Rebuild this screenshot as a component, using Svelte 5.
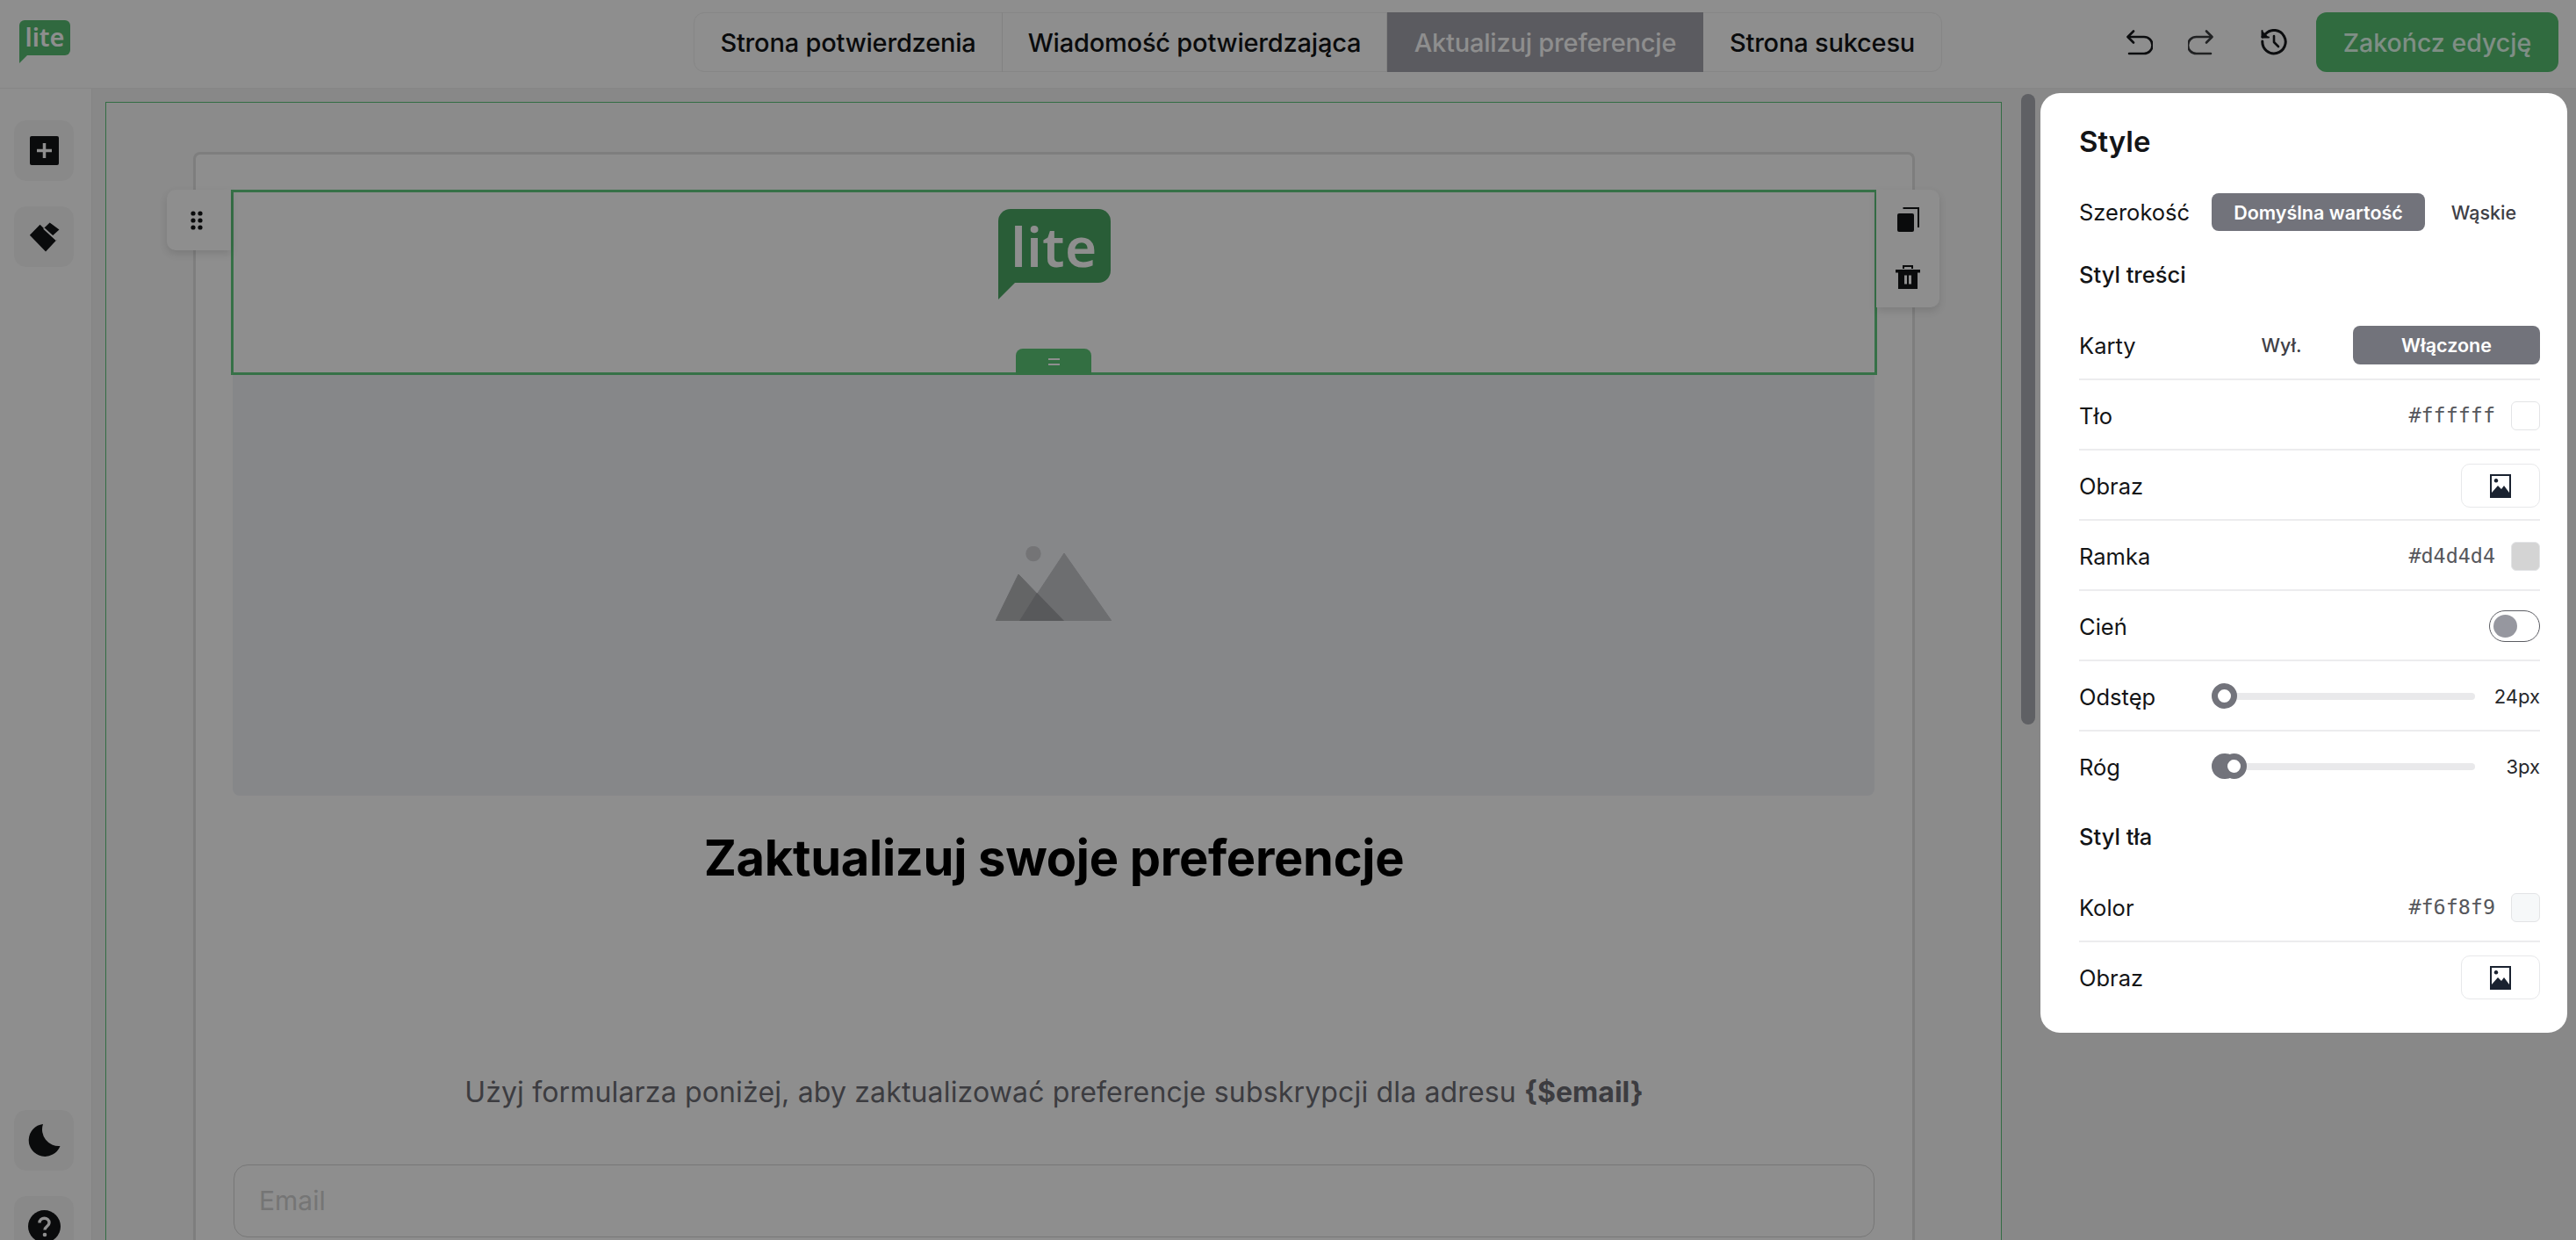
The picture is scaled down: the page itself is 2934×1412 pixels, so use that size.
<script>
  const tabs = [
    { label: 'Strona potwierdzenia', width: 351 },
    { label: 'Wiadomość potwierdzająca', width: 438, },
    { label: 'Aktualizuj preferencje', width: 360, active: true },
    { label: 'Strona sukcesu', width: 271 }
  ];
</script>

<div class="app">
  <header class="topbar">
    <div class="brand">
      <div class="bubble small"><span>lite</span></div>
    </div>
    <nav class="tabs">
      {#each tabs as tab}
        <button class="tab" class:active={tab.active} style="width: {tab.width}px">{tab.label}</button>
      {/each}
    </nav>
    <div class="actions">
      <svg class="hist undo" viewBox="0 0 30 30" fill="none" stroke="#17181b" stroke-width="2.6" stroke-linecap="round" stroke-linejoin="round">
        <path d="M8 2.500 1.500 9 8 15.500" /><path d="M2 9h18a8.500 8.500 0 0 1 0 19H3" />
      </svg>
      <svg class="hist redo" viewBox="0 0 30 30" fill="none" stroke="#3c3d40" stroke-width="2.6" stroke-linecap="round" stroke-linejoin="round">
        <path d="M21 2.500 27.500 9 21 15.500" /><path d="M27 9H9.500a8.500 8.500 0 0 0 0 19H26" />
      </svg>
      <svg class="hist clock" viewBox="0 0 30 30" fill="none" stroke="#17181b" stroke-width="3" stroke-linecap="round" stroke-linejoin="round">
        <path d="M1.800 14a13.200 13.200 0 1 0 3.700-8.500L2 9" />
        <path d="M1.500 2v7.500H9" fill="#17181b" stroke-width="2" />
        <path d="M15 8v7l5 5" stroke-width="2.600" />
      </svg>
      <button class="finish">Zakończ edycję</button>
    </div>
  </header>

  <div class="body">
    <aside class="rail">
      <div class="rail-group">
        <button class="rail-btn">
          <svg viewBox="0 0 33 33" width="33" height="33">
            <rect width="33" height="33" rx="2" fill="#131416" />
            <path d="M16.500 8v17M8 16.500h17" stroke="#fff" stroke-width="3.500" />
          </svg>
        </button>
        <button class="rail-btn">
          <svg viewBox="60 375 120 115" width="37" height="36">
            <path d="M66 425 104 386 118 400 140 379 175 405 150 428 166 442 125 486Z" fill="#131416" />
            <path d="M118 400 165 443" stroke="#fff" stroke-width="6" />
          </svg>
        </button>
      </div>
      <div class="rail-group">
        <button class="rail-btn">
          <svg viewBox="0 0 37 37" width="37" height="37">
            <path d="M17 0A18.500 18.500 0 1 0 36.500 25 19 19 0 0 1 17 0Z" fill="#131416" />
          </svg>
        </button>
        <button class="rail-btn">
          <svg viewBox="0 0 37 37" width="37" height="37">
            <circle cx="18.500" cy="18.500" r="18.500" fill="#131416" />
            <path d="M13 14.500c0-7 11-7 11 0 0 4-5 4-5 8" fill="none" stroke="#fff" stroke-width="3.400" />
            <circle cx="19" cy="28" r="2.300" fill="#fff" />
          </svg>
        </button>
      </div>
    </aside>

    <main class="canvas">
      <div class="frame">
        <div class="card">
          <div class="block">
            <div class="handle">
              <svg viewBox="0 0 14 22" width="14" height="22" fill="#131416">
                <circle cx="3" cy="3" r="2.600" /><circle cx="11" cy="3" r="2.600" />
                <circle cx="3" cy="11" r="2.600" /><circle cx="11" cy="11" r="2.600" />
                <circle cx="3" cy="19" r="2.600" /><circle cx="11" cy="19" r="2.600" />
              </svg>
            </div>
            <div class="bubble big"><span>lite</span></div>
            <div class="resize"><i></i><i></i></div>
            <div class="tools">
              <svg viewBox="0 0 25 28" width="25" height="28">
                <path d="M6.500 1h17.500v22" fill="none" stroke="#131416" stroke-width="2" />
                <rect x="0" y="7" width="19" height="21" rx="2" fill="#131416" />
              </svg>
              <svg viewBox="0 0 28 27" width="28" height="27">
                <path d="M9 4V1h10v3" fill="none" stroke="#131416" stroke-width="2" />
                <path d="M0 5h28v3.500H0z" fill="#131416" />
                <path d="M3 8h22v19H3z" fill="#131416" />
                <path d="M10 11.500h3v10h-3zM15 11.500h3v10h-3z" fill="#fff" />
              </svg>
            </div>
          </div>
          <div class="placeholder">
            <svg viewBox="0 0 132 85" width="132" height="85">
              <circle cx="43" cy="8.500" r="8.700" fill="#d0d1d4" />
              <path d="M78 8 132 85H27Z" fill="#c4c5c9" stroke="#c4c5c9" stroke-width="1" stroke-linejoin="round" />
              <path d="M26 32 0 85H77Z" fill="#b4b5b8" stroke="#b4b5b8" stroke-width="1" stroke-linejoin="round" />
              <path d="M47 53 78 85H27Z" fill="#9fa0a4" />
            </svg>
          </div>
          <h1>Zaktualizuj swoje preferencje</h1>
          <p>Użyj formularza poniżej, aby zaktualizować preferencje subskrypcji dla adresu <b>{'{$email}'}</b></p>
          <div class="input">Email</div>
        </div>
      </div>
    </main>
  </div>

  <div class="scrim"></div>
  <div class="scrollbar"></div>

  <section class="panel">
    <h2>Style</h2>
    <div class="plain width-row">
      <span class="label">Szerokość</span>
      <div class="segment width-seg">
        <span class="seg on wide">Domyślna wartość</span>
        <span class="seg narrow">Wąskie</span>
      </div>
    </div>
    <h3>Styl treści</h3>
    <div class="row">
      <span class="label">Karty</span>
      <div class="segment">
        <span class="seg off">Wył.</span>
        <span class="seg on cards">Włączone</span>
      </div>
    </div>
    <div class="row">
      <span class="label">Tło</span>
      <div class="color"><code>#ffffff</code><span class="swatch white"></span></div>
    </div>
    <div class="row">
      <span class="label">Obraz</span>
      <button class="image-btn">
        <svg viewBox="0 0 24 27" width="24" height="27"><path fill-rule="evenodd" d="M0 0h24v27H0zM2 2v19l7-8 4 4 3-4 6 8V2zM7 5a2.300 2.300 0 1 1-.01 0z" fill="#1a2230" /></svg>
      </button>
    </div>
    <div class="row">
      <span class="label">Ramka</span>
      <div class="color"><code>#d4d4d4</code><span class="swatch grey"></span></div>
    </div>
    <div class="row">
      <span class="label">Cień</span>
      <div class="toggle"><span></span></div>
    </div>
    <div class="row">
      <span class="label">Odstęp</span>
      <div class="slider">
        <div class="track"><span class="thumb"></span></div>
        <span class="value">24px</span>
      </div>
    </div>
    <div class="row plain-row">
      <span class="label">Róg</span>
      <div class="slider">
        <div class="track"><span class="fill"></span><span class="thumb shifted"></span></div>
        <span class="value">3px</span>
      </div>
    </div>
    <h3 class="second">Styl tła</h3>
    <div class="row">
      <span class="label">Kolor</span>
      <div class="color"><code>#f6f8f9</code><span class="swatch pale"></span></div>
    </div>
    <div class="row plain-row">
      <span class="label">Obraz</span>
      <button class="image-btn">
        <svg viewBox="0 0 24 27" width="24" height="27"><path fill-rule="evenodd" d="M0 0h24v27H0zM2 2v19l7-8 4 4 3-4 6 8V2zM7 5a2.300 2.300 0 1 1-.01 0z" fill="#1a2230" /></svg>
      </button>
    </div>
  </section>
</div>

<style>
  :global(body) {
    margin: 0;
    font-family: Inter, 'Liberation Sans', sans-serif;
    color: #131416;
  }

  button {
    font: inherit;
    border: none;
    background: none;
    padding: 0;
    color: inherit;
  }

  .app {
    position: relative;
    height: 100vh;
    overflow: hidden;
    background: #f4f4f4;
    display: flex;
    flex-direction: column;
  }

  .topbar {
    box-sizing: border-box;
    height: 101px;
    flex: none;
    background: #fff;
    border-bottom: 1px solid #f0f0f0;
    position: relative;
    display: flex;
    justify-content: center;
    padding-top: 14px;
    padding-left: 68px;
  }

  .brand {
    position: absolute;
    left: 22px;
    top: 23px;
  }

  .bubble {
    position: relative;
    display: flex;
    justify-content: center;
    background: #56bd72;
    color: #fff;
    font-family: 'Noto Sans', sans-serif;
    font-weight: 600;
  }

  .bubble::after {
    content: '';
    position: absolute;
    left: 0;
    top: 100%;
    border-style: solid;
  }

  .bubble.small {
    width: 58px;
    height: 40px;
    border-radius: 6px 6px 6px 0;
    font-size: 29px;
    line-height: 38px;
  }

  .bubble.small::after {
    border-width: 9px 9px 0 0;
    border-color: #56bd72 transparent transparent transparent;
  }

  .bubble.big {
    width: 128px;
    height: 84px;
    margin: 19px auto 0;
    border-radius: 14px 14px 14px 0;
    background: #4ba863;
    font-size: 62px;
    line-height: 84px;
    letter-spacing: 0.5px;
  }

  .bubble.big::after {
    border-width: 19px 19px 0 0;
    border-color: #4ba863 transparent transparent transparent;
  }

  .tabs {
    display: flex;
    height: 68px;
    box-sizing: border-box;
    border: 1px solid #f0f0f0;
    border-radius: 12px;
  }

  .tab {
    box-sizing: border-box;
    font-size: 29px;
    letter-spacing: -0.2px;
    font-weight: 450;
    border-right: 1px solid #eaeaea;
    white-space: nowrap;
    margin: -1px 0;
    height: 68px;
  }

  .tab:last-child {
    border-right: none;
  }

  .tab.active {
    background: #a3a3ac;
    color: #fff;
    border-right: none;
  }

  .actions {
    position: absolute;
    top: 14px;
    right: 20px;
    display: flex;
    align-items: center;
    height: 68px;
  }

  .hist {
    width: 30px;
    height: 30px;
  }

  .undo {
    margin-right: 41px;
    transform: translateX(1px);
  }

  .redo {
    margin-right: 53px;
  }

  .clock {
    margin-right: 33px;
  }

  .finish {
    width: 276px;
    height: 68px;
    border-radius: 12px;
    background: #56c071;
    color: #e4ffef;
    font-size: 28.500px;
    font-weight: 500;
  }

  .body {
    flex: 1;
    min-height: 0;
    display: flex;
  }

  .rail {
    box-sizing: border-box;
    width: 105px;
    flex: none;
    background: #fff;
    border-right: 1px solid #efefef;
    padding: 36px 20px 0 16px;
    display: flex;
    flex-direction: column;
    justify-content: space-between;
  }

  .rail-group {
    display: flex;
    flex-direction: column;
    gap: 29px;
  }

  .rail-btn {
    width: 68px;
    height: 69px;
    flex: none;
    border-radius: 14px;
    background: #f7f7f7;
    display: flex;
    align-items: center;
    justify-content: center;
  }

  .rail-group:last-child {
    margin-bottom: -19px;
  }

  .canvas {
    flex: none;
    width: 2219px;
    padding: 15px 0 0 15px;
    box-sizing: border-box;
    overflow: hidden;
  }

  .frame {
    box-sizing: border-box;
    width: 2160px;
    border: 1px solid #5cc47a;
    border-bottom: none;
    padding: 56px 95px 0 99px;
    background: #f9f9f9;
    height: 1400px;
  }

  .card {
    box-sizing: border-box;
    border: 3px solid #e2e2e2;
    border-bottom: none;
    border-radius: 8px 8px 0 0;
    background: #fff;
    padding: 40px 40px 0 40px;
    height: 1400px;
    width: 1961px;
  }

  .block {
    position: relative;
    box-sizing: border-box;
    height: 211px;
    border: 3px solid #62cb80;
  }

  .handle {
    position: absolute;
    left: -76px;
    top: -3px;
    box-sizing: border-box;
    width: 73px;
    height: 69px;
    padding-right: 5px;
    background: #fff;
    border-radius: 10px 0 0 10px;
    box-shadow: 0 4px 10px rgba(0, 0, 0, 0.12);
    display: flex;
    align-items: center;
    justify-content: center;
  }

  .resize {
    position: absolute;
    left: 891px;
    bottom: -3px;
    width: 86px;
    height: 30px;
    border-radius: 8px 8px 0 0;
    background: #5dc777;
    display: flex;
    flex-direction: column;
    align-items: center;
    justify-content: center;
    gap: 4px;
  }

  .resize i {
    width: 13px;
    height: 2px;
    background: #fff;
  }

  .tools {
    position: absolute;
    left: calc(100% + 2px);
    top: -3px;
    box-sizing: border-box;
    width: 72px;
    height: 134px;
    background: #fff;
    border-radius: 0 10px 10px 0;
    box-shadow: 0 4px 10px rgba(0, 0, 0, 0.12);
    display: flex;
    flex-direction: column;
    align-items: center;
    gap: 38px;
    padding: 20px 0 0 0;
  }

  .placeholder {
    height: 479px;
    margin: 0 3px 0 2px;
    border-radius: 0 0 8px 8px;
    background: #f0f2f7;
    display: flex;
    justify-content: center;
    padding-top: 195px;
    box-sizing: border-box;
  }

  h1 {
    margin: 35px 0 0;
    text-align: center;
    font-size: 56px;
    line-height: 72px;
    font-weight: 700;
    letter-spacing: -0.28px;
    color: #000;
  }

  p {
    margin: 207px 0 0;
    text-align: center;
    font-size: 32px;
    line-height: 48px;
    letter-spacing: 0.16px;
    color: #6c6d74;
  }

  p b {
    font-weight: 700;
    letter-spacing: 0;
  }

  .input {
    box-sizing: border-box;
    height: 83px;
    margin: 58px 3px 0;
    padding: 0 28px;
    border: 1px solid #d6d6d6;
    border-radius: 16px;
    font-size: 30px;
    line-height: 81px;
    color: #d2d2d2;
  }

  .scrim {
    position: absolute;
    inset: 0;
    background: rgba(0, 0, 0, 0.443);
  }

  .scrollbar {
    position: absolute;
    left: 2302px;
    top: 107px;
    width: 16px;
    height: 718px;
    border-radius: 8px;
    background: #5f6064;
  }

  .panel {
    position: absolute;
    left: 2324px;
    top: 106px;
    box-sizing: border-box;
    width: 600px;
    height: 1070px;
    padding: 35px 31px 0 44px;
    border-radius: 22px;
    background: #fff;
    font-size: 25.500px;
  }

  h2 {
    margin: 0;
    font-size: 33px;
    line-height: 40px;
    font-weight: 600;
  }

  h3 {
    margin: 30px 0 20px;
    font-size: 25.500px;
    line-height: 40px;
    font-weight: 500;
  }

  h3.second {
    margin-top: 20px;
  }

  .plain {
    display: flex;
    align-items: center;
    justify-content: space-between;
  }

  .width-row {
    margin-top: 39px;
    height: 43px;
  }

  .row {
    box-sizing: border-box;
    height: 80px;
    padding-top: 2px;
    display: flex;
    align-items: center;
    justify-content: space-between;
    border-bottom: 2px solid #ececee;
  }

  .row.plain-row {
    border-bottom: none;
    padding-top: 0;
  }

  .segment {
    display: flex;
    align-items: center;
    font-size: 21.500px;
    color: #3f4046;
  }

  .width-seg {
    width: 374px;
  }

  .seg {
    display: flex;
    align-items: center;
    justify-content: center;
    font-weight: 500;
  }

  .seg.on {
    color: #fff;
    background: #72737b;
    border-radius: 8px;
    font-weight: 600;
  }

  .wide {
    width: 243px;
    height: 43px;
  }

  .narrow {
    flex: 1;
    padding-left: 3px;
  }

  .off {
    width: 159px;
    padding-right: 2px;
  }

  .cards {
    width: 213px;
    height: 44px;
  }

  .color {
    display: flex;
    align-items: center;
    gap: 18px;
  }

  code {
    font-family: 'DejaVu Sans Mono', monospace;
    font-size: 23.400px;
    color: #56575c;
  }

  .swatch {
    box-sizing: border-box;
    width: 33px;
    height: 33px;
    border: 1px solid #e3e4e6;
    border-radius: 6px;
  }

  .white {
    background: #fff;
  }

  .grey {
    background: #d4d4d4;
  }

  .pale {
    background: #f6f8f9;
  }

  .image-btn {
    box-sizing: border-box;
    width: 90px;
    height: 50px;
    border: 1px solid #e7e8ea;
    border-radius: 10px;
    background: #fff;
    display: flex;
    align-items: center;
    justify-content: center;
  }

  .toggle {
    box-sizing: border-box;
    width: 58px;
    height: 36px;
    border: 1px solid #5c5d63;
    border-radius: 18px;
    padding: 4px;
  }

  .toggle span {
    display: block;
    width: 27px;
    height: 26px;
    border-radius: 50%;
    background: #96979f;
  }

  .slider {
    display: flex;
    align-items: center;
    width: 374px;
    justify-content: space-between;
  }

  .track {
    position: relative;
    width: 300px;
    height: 8px;
    border-radius: 4px;
    background: #e9e9eb;
  }

  .thumb {
    position: absolute;
    left: 0;
    top: -11px;
    box-sizing: border-box;
    width: 29px;
    height: 29px;
    border: 7px solid #72737b;
    border-radius: 50%;
    background: #fff;
  }

  .thumb.shifted {
    left: 11px;
  }

  .fill {
    position: absolute;
    left: 0;
    top: -11px;
    width: 30px;
    height: 29px;
    border-radius: 15px;
    background: #72737b;
  }

  .value {
    font-size: 22px;
    color: #26272b;
  }
</style>
